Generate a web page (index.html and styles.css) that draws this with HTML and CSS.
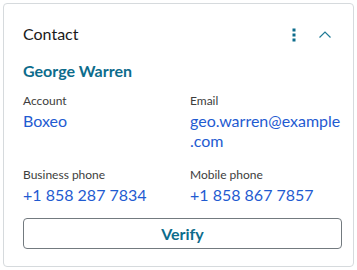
FILE: index.html
```html
<!DOCTYPE html>
<html>
<head>
<meta charset="utf-8">
<link rel="stylesheet" href="styles.css">
</head>
<body>
<div class="card">
  <div class="header">
    <h2 class="title">Contact</h2>
    <div class="actions">
      <span class="icon-btn">
        <svg width="6" height="14" viewBox="0 0 6 14"><rect x="1.5" y="0.5" width="3" height="3" fill="#0d6c8c"/><rect x="1.5" y="5.5" width="3" height="3" fill="#0d6c8c"/><rect x="1.5" y="10.5" width="3" height="3" fill="#0d6c8c"/></svg>
      </span>
      <span class="icon-btn">
        <svg width="14" height="9" viewBox="0 0 14 9"><path d="M1.5 7.5 L7 2 L12.5 7.5" fill="none" stroke="#1f7a96" stroke-width="1.2"/></svg>
      </span>
    </div>
  </div>
  <div class="name">George Warren</div>
  <div class="grid">
    <div class="field">
      <div class="label">Account</div>
      <div class="value">Boxeo</div>
    </div>
    <div class="field">
      <div class="label">Email</div>
      <div class="value">geo.warren@example.com</div>
    </div>
    <div class="field">
      <div class="label">Business phone</div>
      <div class="value">+1 858 287 7834</div>
    </div>
    <div class="field">
      <div class="label">Mobile phone</div>
      <div class="value">+1 858 867 7857</div>
    </div>
  </div>
  <button class="verify">Verify</button>
</div>
</body>
</html>
```
FILE: styles.css
```css
html, body {
  margin: 0;
  padding: 0;
  background: #ffffff;
}
body {
  font-family: Lato, "Liberation Sans", sans-serif;
  padding: 3px 3px 0 3px;
}
.card {
  width: 351px;
  height: 264px;
  box-sizing: border-box;
  border: 1px solid #d6dadd;
  border-radius: 4px;
  padding: 20px 11px 0 19px;
  display: flex;
  flex-direction: column;
}
.header {
  display: flex;
  justify-content: space-between;
  align-items: center;
  height: 20px;
}
.title {
  margin: 0;
  font-size: 16px;
  line-height: 20px;
  font-weight: 400;
  color: #1a1a1a;
}
.actions {
  display: flex;
  gap: 7px;
  margin-right: 5px;
  margin-top: 1px;
}
.icon-btn {
  width: 24px;
  height: 20px;
  display: flex;
  align-items: center;
  justify-content: center;
}
.name {
  margin-top: 17px;
  font-size: 16px;
  line-height: 20px;
  font-weight: 700;
  color: #0d6c8c;
}
.grid {
  margin-top: 12px;
  display: grid;
  grid-template-columns: 167px 1fr;
  row-gap: 16px;
}
.label {
  font-size: 12px;
  line-height: 16px;
  color: #3d3d3d;
}
.value {
  margin-top: 2px;
  font-size: 16px;
  line-height: 20px;
  color: #1f5bd1;
  overflow-wrap: anywhere;
}
.verify {
  margin-top: 13px;
  height: 31px;
  width: 100%;
  box-sizing: border-box;
  border: 1px solid #737a7f;
  border-radius: 4px;
  background: #ffffff;
  font-family: Lato, "Liberation Sans", sans-serif;
  font-size: 16px;
  font-weight: 700;
  color: #0d6c8c;
  padding: 0;
}
```
